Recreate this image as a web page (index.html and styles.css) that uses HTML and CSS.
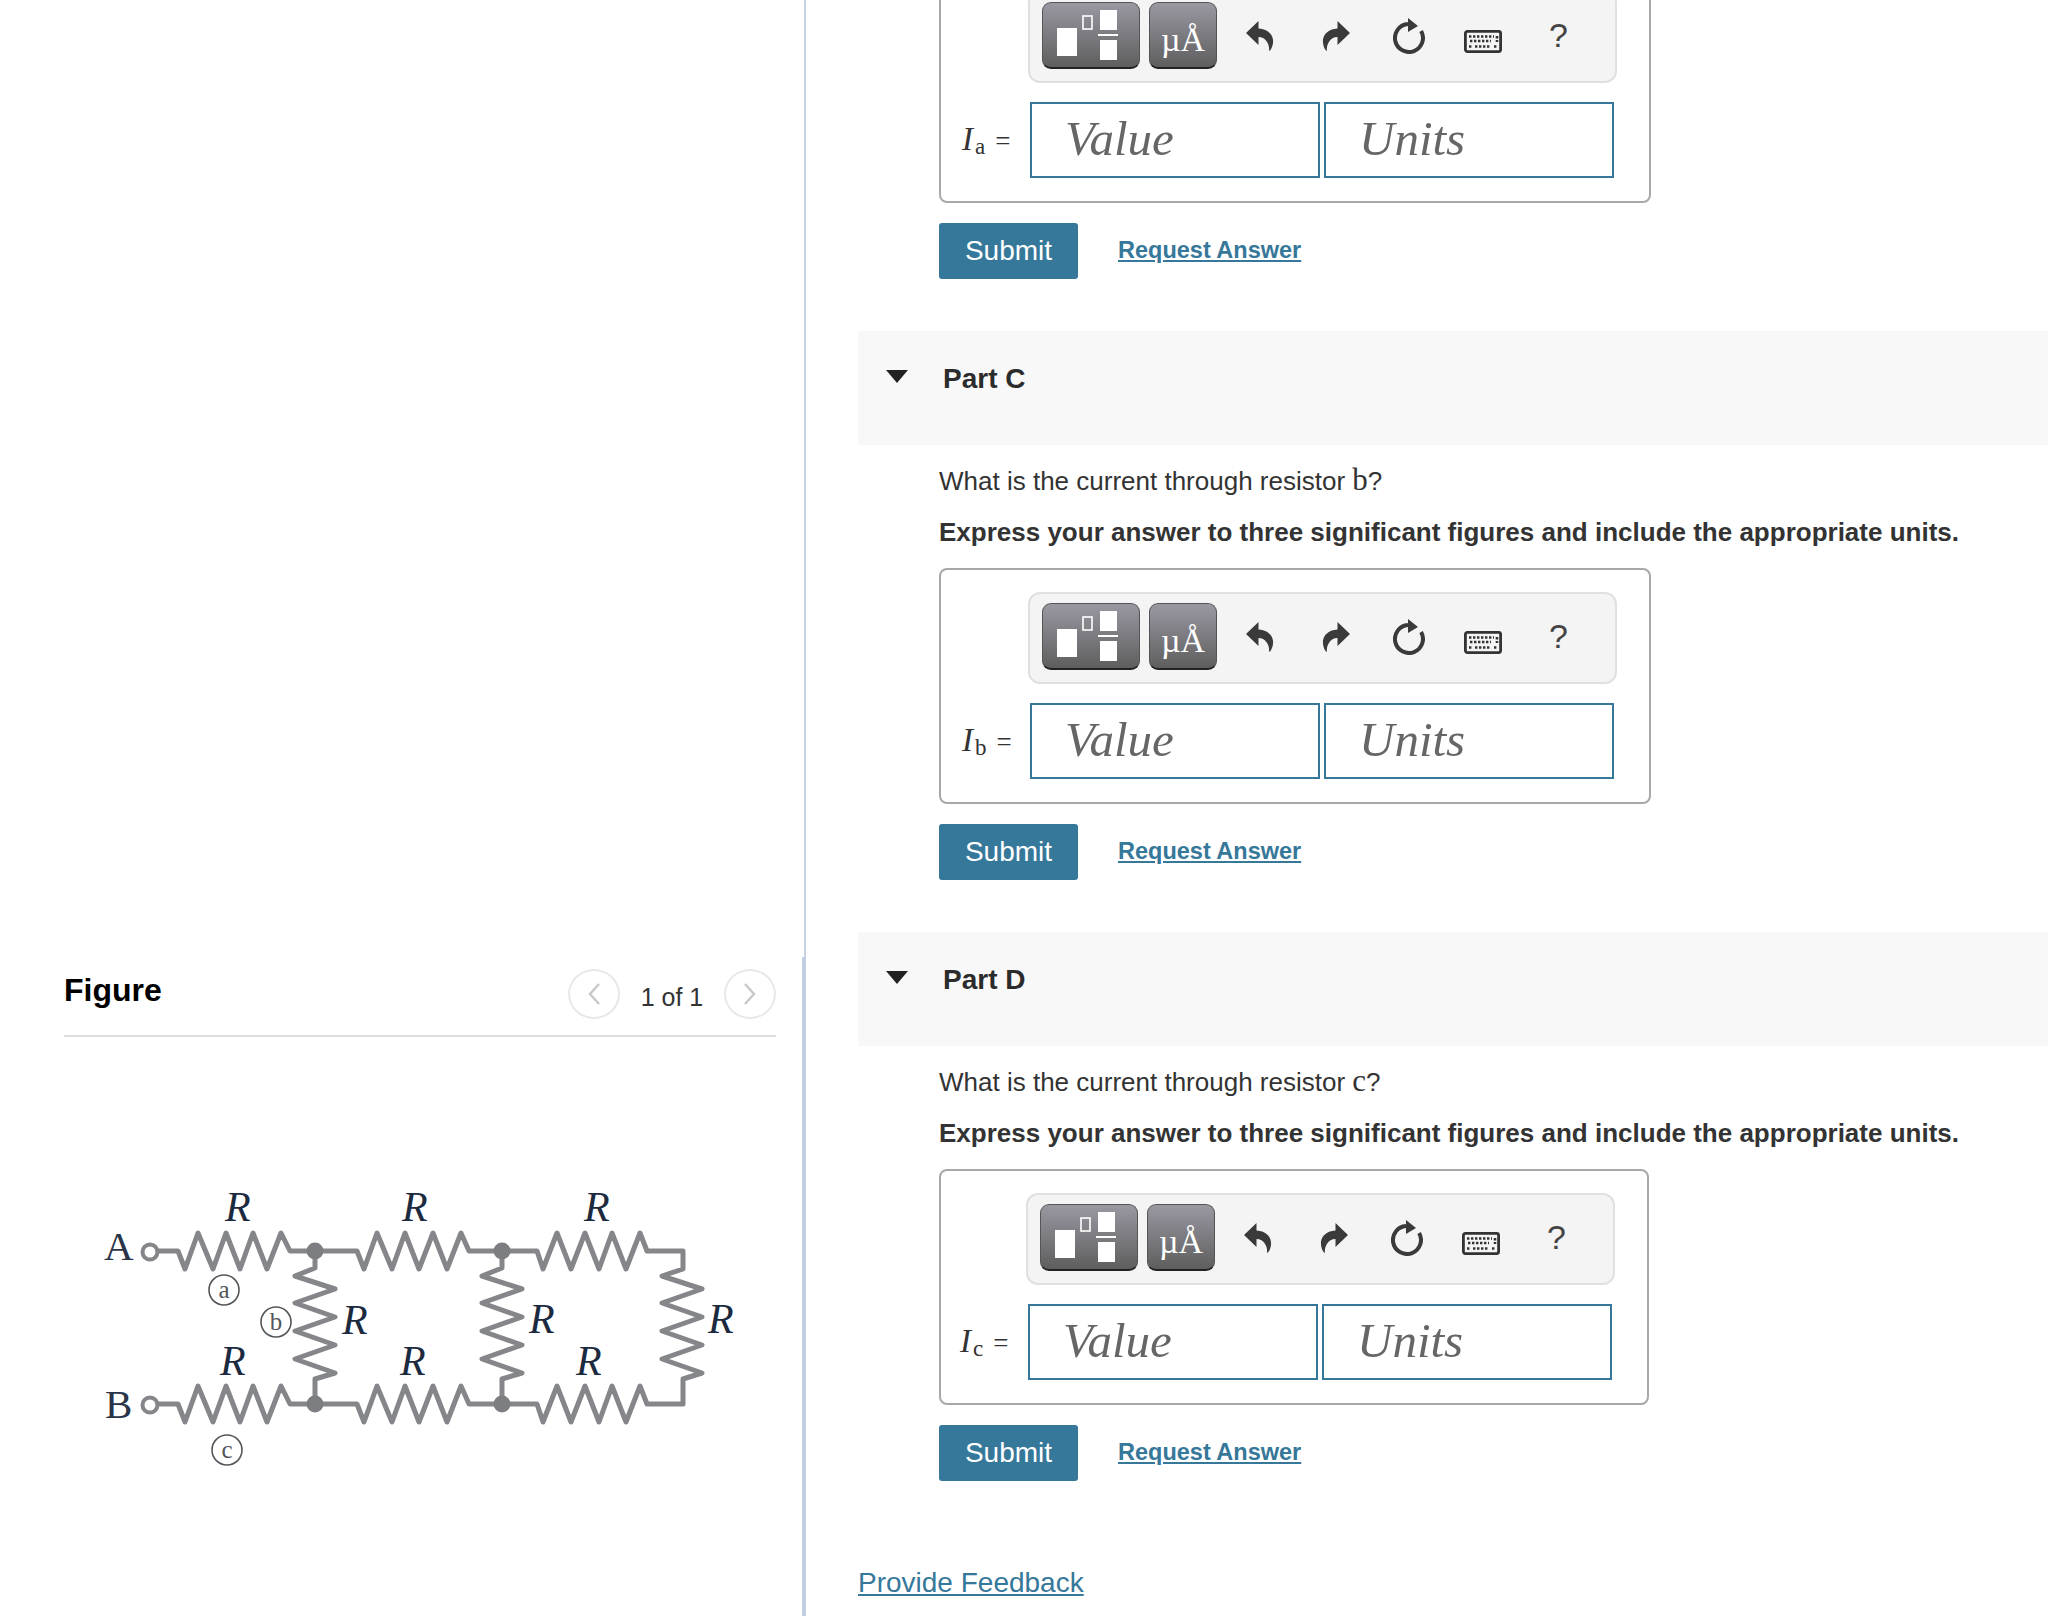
FILE: index.html
```html
<!DOCTYPE html>
<html lang="en">
<head>
<meta charset="utf-8">
<title>Parts C and D</title>
<link rel="stylesheet" href="styles.css">
</head>
<body>
<div class="page">
  <div class="left">
    <div class="figure-panel">
      <div class="figure-head">
        <h2 class="figure-title">Figure</h2>
        <div class="pager">
          <span class="pager-btn">
            <svg width="14" height="24" viewBox="0 0 14 24"><path d="M12 2 L3 12 L12 22" fill="none" stroke="#c8c8c8" stroke-width="2.4"/></svg>
          </span>
          <span class="pager-text">1 of 1</span>
          <span class="pager-btn">
            <svg width="14" height="24" viewBox="0 0 14 24"><path d="M2 2 L11 12 L2 22" fill="none" stroke="#c8c8c8" stroke-width="2.4"/></svg>
          </span>
        </div>
      </div>
      <svg class="circuit" width="712" height="320" viewBox="64 1170 712 320">
        <g fill="none" stroke="#85868a" stroke-width="5" stroke-linejoin="round" stroke-linecap="round">
          <circle cx="150" cy="1251" r="7.5" stroke-width="4"/>
          <circle cx="150" cy="1404" r="7.5" stroke-width="4"/>
          <path d="M158 1250 H178 L185 1268 L198 1232 L213 1268 L226 1232 L240 1268 L253 1232 L267 1268 L281 1232 L290 1250 H357 L364 1268 L377 1232 L392 1268 L405 1232 L419 1268 L433 1232 L447 1268 L461 1232 L469 1250 H537 L543 1268 L557 1232 L571 1268 L585 1232 L599 1268 L612 1232 L626 1268 L640 1232 L647 1250 H683 V1268 L662 1275 L702 1288 L662 1302 L702 1316 L662 1330 L702 1344 L662 1358 L702 1372 L683 1378 V1403 H647 L640 1385 L626 1421 L612 1385 L599 1421 L585 1385 L571 1421 L557 1385 L543 1421 L537 1403 H469 L461 1385 L447 1421 L433 1385 L419 1421 L405 1385 L392 1421 L377 1385 L364 1421 L357 1403 H290 L281 1385 L267 1421 L253 1385 L240 1421 L226 1385 L213 1421 L198 1385 L185 1421 L178 1403 H158"/>
          <path d="M315 1250 V1267 L295 1275 L335 1288 L295 1302 L335 1316 L295 1330 L335 1344 L295 1358 L335 1372 L315 1378 V1403"/>
          <path d="M502 1250 V1267 L482 1275 L522 1288 L482 1302 L522 1316 L482 1330 L522 1344 L482 1358 L522 1372 L502 1378 V1403"/>
        </g>
        <g fill="#7d7e82">
          <circle cx="315" cy="1250" r="8.5"/>
          <circle cx="315" cy="1403" r="8.5"/>
          <circle cx="502" cy="1250" r="8.5"/>
          <circle cx="502" cy="1403" r="8.5"/>
        </g>
        <g class="circuit-r">
          <text x="225" y="1220">R</text>
          <text x="402" y="1220">R</text>
          <text x="584" y="1220">R</text>
          <text x="220" y="1374">R</text>
          <text x="400" y="1374">R</text>
          <text x="576" y="1374">R</text>
          <text x="342" y="1333">R</text>
          <text x="529" y="1332">R</text>
          <text x="708" y="1332">R</text>
        </g>
        <g class="circuit-term">
          <text x="104" y="1259">A</text>
          <text x="105" y="1417">B</text>
        </g>
        <g fill="none" stroke="#55565a" stroke-width="1.6">
          <circle cx="224" cy="1289" r="15"/>
          <circle cx="276" cy="1321" r="15"/>
          <circle cx="227" cy="1449" r="15"/>
        </g>
        <g class="circuit-mark">
          <text x="224" y="1297">a</text>
          <text x="276" y="1329">b</text>
          <text x="227" y="1457">c</text>
        </g>
      </svg>
    </div>
  </div>

  <div class="right">
    <!-- part B, scrolled off the top -->
    <div class="part-body">
      <div class="answer">
        <div class="toolbar">
          <span class="tool-btn tool-btn-wide">
            <svg width="98" height="67" viewBox="0 0 98 67" fill="#fff"><rect x="15" y="26" width="20" height="28"/><rect x="41" y="14" width="9" height="13" fill="none" stroke="#fff" stroke-width="1.6"/><rect x="58" y="8" width="17" height="20"/><rect x="56" y="32" width="20" height="2"/><rect x="58" y="38" width="17" height="20"/></svg>
          </span>
          <span class="tool-btn tool-btn-unit"><span>&micro;</span><span>&Aring;</span></span>
          <svg class="ic ic-undo" width="28" height="30" viewBox="0 0 28 30"><path d="M0 12 L12.5 0 V7.5 C22 8 28 14 27 22 C26.5 26 25 29 23 30 C24 24 20 16 12.5 16 V24 Z" fill="#3a3a3a"/></svg>
          <svg class="ic ic-redo" width="28" height="30" viewBox="0 0 28 30"><path d="M28 12 L15.5 0 V7.5 C6 8 0 14 1 22 C1.5 26 3 29 5 30 C4 24 8 16 15.5 16 V24 Z" fill="#3a3a3a"/></svg>
          <svg class="ic ic-reset" width="32" height="36" viewBox="0 0 32 36"><path d="M28.1 13 A14 14 0 1 1 15 6" fill="none" stroke="#3a3a3a" stroke-width="4"/><path d="M15 0 L25 8 L15 14 Z" fill="#3a3a3a"/></svg>
          <svg class="ic ic-keys" width="38" height="23" viewBox="0 0 38 23"><rect x="1.4" y="1.4" width="35.2" height="20.2" rx="2" fill="#f4f4f4" stroke="#333" stroke-width="2.8"/><path d="M5 6.5 H30 M6 11 H27 M5 16.5 H8 M11 16.5 H27 M30 16.5 H33 M33 6 V12" fill="none" stroke="#333" stroke-width="2.6" stroke-dasharray="2.4 1.6"/></svg>
          <span class="ic-help">?</span>
        </div>
        <div class="answer-row">
          <span class="answer-label"><i>I</i><sub>a</sub><span class="eq">=</span></span>
          <span class="field">Value</span>
          <span class="field">Units</span>
        </div>
      </div>
      <div class="actions">
        <span class="submit">Submit</span>
        <a class="request" href="#">Request Answer</a>
      </div>
    </div>

    <div class="part-head">
      <span class="caret"></span>
      <h3 class="part-title">Part C</h3>
    </div>
    <div class="part-body">
      <p class="question">What is the current through resistor <span class="math">b</span>?</p>
      <p class="instruction">Express your answer to three significant figures and include the appropriate units.</p>
      <div class="answer">
        <div class="toolbar">
          <span class="tool-btn tool-btn-wide">
            <svg width="98" height="67" viewBox="0 0 98 67" fill="#fff"><rect x="15" y="26" width="20" height="28"/><rect x="41" y="14" width="9" height="13" fill="none" stroke="#fff" stroke-width="1.6"/><rect x="58" y="8" width="17" height="20"/><rect x="56" y="32" width="20" height="2"/><rect x="58" y="38" width="17" height="20"/></svg>
          </span>
          <span class="tool-btn tool-btn-unit"><span>&micro;</span><span>&Aring;</span></span>
          <svg class="ic ic-undo" width="28" height="30" viewBox="0 0 28 30"><path d="M0 12 L12.5 0 V7.5 C22 8 28 14 27 22 C26.5 26 25 29 23 30 C24 24 20 16 12.5 16 V24 Z" fill="#3a3a3a"/></svg>
          <svg class="ic ic-redo" width="28" height="30" viewBox="0 0 28 30"><path d="M28 12 L15.5 0 V7.5 C6 8 0 14 1 22 C1.5 26 3 29 5 30 C4 24 8 16 15.5 16 V24 Z" fill="#3a3a3a"/></svg>
          <svg class="ic ic-reset" width="32" height="36" viewBox="0 0 32 36"><path d="M28.1 13 A14 14 0 1 1 15 6" fill="none" stroke="#3a3a3a" stroke-width="4"/><path d="M15 0 L25 8 L15 14 Z" fill="#3a3a3a"/></svg>
          <svg class="ic ic-keys" width="38" height="23" viewBox="0 0 38 23"><rect x="1.4" y="1.4" width="35.2" height="20.2" rx="2" fill="#f4f4f4" stroke="#333" stroke-width="2.8"/><path d="M5 6.5 H30 M6 11 H27 M5 16.5 H8 M11 16.5 H27 M30 16.5 H33 M33 6 V12" fill="none" stroke="#333" stroke-width="2.6" stroke-dasharray="2.4 1.6"/></svg>
          <span class="ic-help">?</span>
        </div>
        <div class="answer-row">
          <span class="answer-label"><i>I</i><sub>b</sub><span class="eq">=</span></span>
          <span class="field">Value</span>
          <span class="field">Units</span>
        </div>
      </div>
      <div class="actions">
        <span class="submit">Submit</span>
        <a class="request" href="#">Request Answer</a>
      </div>
    </div>

    <div class="part-head">
      <span class="caret"></span>
      <h3 class="part-title">Part D</h3>
    </div>
    <div class="part-body">
      <p class="question">What is the current through resistor <span class="math">c</span>?</p>
      <p class="instruction">Express your answer to three significant figures and include the appropriate units.</p>
      <div class="answer answer-narrow">
        <div class="toolbar">
          <span class="tool-btn tool-btn-wide">
            <svg width="98" height="67" viewBox="0 0 98 67" fill="#fff"><rect x="15" y="26" width="20" height="28"/><rect x="41" y="14" width="9" height="13" fill="none" stroke="#fff" stroke-width="1.6"/><rect x="58" y="8" width="17" height="20"/><rect x="56" y="32" width="20" height="2"/><rect x="58" y="38" width="17" height="20"/></svg>
          </span>
          <span class="tool-btn tool-btn-unit"><span>&micro;</span><span>&Aring;</span></span>
          <svg class="ic ic-undo" width="28" height="30" viewBox="0 0 28 30"><path d="M0 12 L12.5 0 V7.5 C22 8 28 14 27 22 C26.5 26 25 29 23 30 C24 24 20 16 12.5 16 V24 Z" fill="#3a3a3a"/></svg>
          <svg class="ic ic-redo" width="28" height="30" viewBox="0 0 28 30"><path d="M28 12 L15.5 0 V7.5 C6 8 0 14 1 22 C1.5 26 3 29 5 30 C4 24 8 16 15.5 16 V24 Z" fill="#3a3a3a"/></svg>
          <svg class="ic ic-reset" width="32" height="36" viewBox="0 0 32 36"><path d="M28.1 13 A14 14 0 1 1 15 6" fill="none" stroke="#3a3a3a" stroke-width="4"/><path d="M15 0 L25 8 L15 14 Z" fill="#3a3a3a"/></svg>
          <svg class="ic ic-keys" width="38" height="23" viewBox="0 0 38 23"><rect x="1.4" y="1.4" width="35.2" height="20.2" rx="2" fill="#f4f4f4" stroke="#333" stroke-width="2.8"/><path d="M5 6.5 H30 M6 11 H27 M5 16.5 H8 M11 16.5 H27 M30 16.5 H33 M33 6 V12" fill="none" stroke="#333" stroke-width="2.6" stroke-dasharray="2.4 1.6"/></svg>
          <span class="ic-help">?</span>
        </div>
        <div class="answer-row">
          <span class="answer-label"><i>I</i><sub>c</sub><span class="eq">=</span></span>
          <span class="field">Value</span>
          <span class="field">Units</span>
        </div>
      </div>
      <div class="actions">
        <span class="submit">Submit</span>
        <a class="request" href="#">Request Answer</a>
      </div>
    </div>

    <a class="feedback" href="#">Provide Feedback</a>
  </div>
</div>
</body>
</html>
```

FILE: styles.css
```css
*{
    margin:0;
    padding:0;
    box-sizing:border-box;
}
html, body{
    height:1616px;
    overflow:hidden;
    background:#fff;
}
body{
    color:#333;
    font-family:"Liberation Sans", Arial, sans-serif;
}
.page{
    display:flex;
    height:1616px;
    overflow:hidden;
}

/* left column */
.left{
    width:806px;
    flex:none;
    height:1616px;
    padding-top:957px;
    background:linear-gradient(#c5d3e2, #c5d3e2) no-repeat 804px 0 / 2px 957px;
}
.figure-panel{
    height:659px;
    padding:12px 26px 0 64px;
    border-right:4px solid #c2cfe0;
}
.figure-head{
    display:flex;
    justify-content:space-between;
    align-items:flex-start;
    height:68px;
    border-bottom:2px solid #ddd;
}
.figure-title{
    font-size:32px;
    line-height:42px;
    color:#000;
}
.pager{
    display:flex;
    align-items:center;
}
.pager-btn{
    display:flex;
    align-items:center;
    justify-content:center;
    width:52px;
    height:50px;
    border:2px solid #e8e8e8;
    border-radius:50%;
}
.pager-text{
    width:104px;
    text-align:center;
    font-size:25px;
    margin-top:7px;
}
.circuit{
    display:block;
    margin-top:134px;
}
.circuit-r text{
    font:italic 42px "Liberation Serif", serif;
    fill:#1c2a40;
}
.circuit-term text{
    font:41px "Liberation Serif", serif;
    fill:#2a3448;
}
.circuit-mark text{
    font:25px "Liberation Serif", serif;
    fill:#55565a;
    text-anchor:middle;
}

/* right column */
.right{
    flex:1;
    min-width:0;
    margin-top:-52px;
    padding-left:52px;
}
.part-body{
    padding-left:81px;
}
.part-head{
    display:flex;
    align-items:flex-start;
    height:114px;
    margin-top:52px;
    padding:31px 0 0 28px;
    background:#f8f8f8;
}
.part-title{
    font-size:28px;
    line-height:34px;
    color:#2b2b2b;
    margin-left:35px;
}
.caret{
    width:0;
    height:0;
    margin-top:8px;
    border-left:11px solid transparent;
    border-right:11px solid transparent;
    border-top:13px solid #222;
}
.question{
    margin-top:18px;
    font-size:26px;
    line-height:34px;
}
.math{
    font-family:"Liberation Serif", serif;
    font-size:31px;
}
.instruction{
    margin-top:17px;
    font-size:26px;
    line-height:34px;
    font-weight:bold;
}
.answer{
    width:712px;
    margin-top:19px;
    padding:22px 32px 23px 87px;
    border:2px solid #a8a8a8;
    border-radius:8px;
}
.answer-narrow{
    width:710px;
    padding-left:85px;
}
.toolbar{
    display:flex;
    align-items:center;
    width:589px;
    height:92px;
    padding:0 12px;
    background:#f4f4f4;
    border:2px solid #e0e0e0;
    border-radius:12px;
}
.tool-btn{
    display:flex;
    height:67px;
    margin-top:-3px;
    border:1px solid #555;
    border-bottom:2px solid #222;
    border-radius:9px;
    background:linear-gradient(#9a98a2, #5e5e5e);
}
.tool-btn svg{
    margin:-1px;
}
.tool-btn-wide{
    width:98px;
}
.tool-btn-unit{
    width:68px;
    margin-left:9px;
    align-items:flex-end;
    justify-content:center;
    padding-bottom:7px;
    font:34px/40px "Liberation Serif", serif;
    color:#fff;
}
.ic{
    flex:none;
}
.ic-undo{
    margin-left:29px;
    margin-top:-3px;
}
.ic-redo{
    margin-left:48px;
    margin-top:-3px;
}
.ic-reset{
    margin-left:43px;
    margin-top:-2px;
}
.ic-keys{
    margin-left:39px;
    margin-top:8px;
}
.ic-help{
    margin-left:47px;
    margin-top:-4px;
    font-size:34px;
    line-height:40px;
    color:#444;
}
.answer-row{
    display:flex;
    align-items:center;
    margin-top:19px;
    margin-left:-66px;
}
.answer-label{
    width:68px;
    white-space:nowrap;
    font:33px/40px "Liberation Serif", serif;
}
.answer-label i{
    font-style:italic;
}
.answer-label sub{
    font-size:23px;
    line-height:0;
    vertical-align:-4px;
    margin-left:2px;
}
.eq{
    font-size:27px;
    margin-left:10px;
}
.field{
    width:290px;
    height:76px;
    padding-left:33px;
    border:2px solid #36789a;
    font:italic 49px/70px "Liberation Serif", serif;
    color:#666;
}
.field + .field{
    margin-left:4px;
}
.actions{
    display:flex;
    align-items:center;
    margin-top:20px;
}
.submit{
    width:139px;
    height:56px;
    background:#36789a;
    border-radius:3px;
    color:#fff;
    font-size:28px;
    line-height:56px;
    text-align:center;
}
.request{
    margin-left:40px;
    margin-top:-2px;
    color:#36789a;
    font-size:23.5px;
    font-weight:bold;
}
.feedback{
    display:inline-block;
    margin-top:85px;
    color:#36789a;
    font-size:28px;
    line-height:34px;
}
```
